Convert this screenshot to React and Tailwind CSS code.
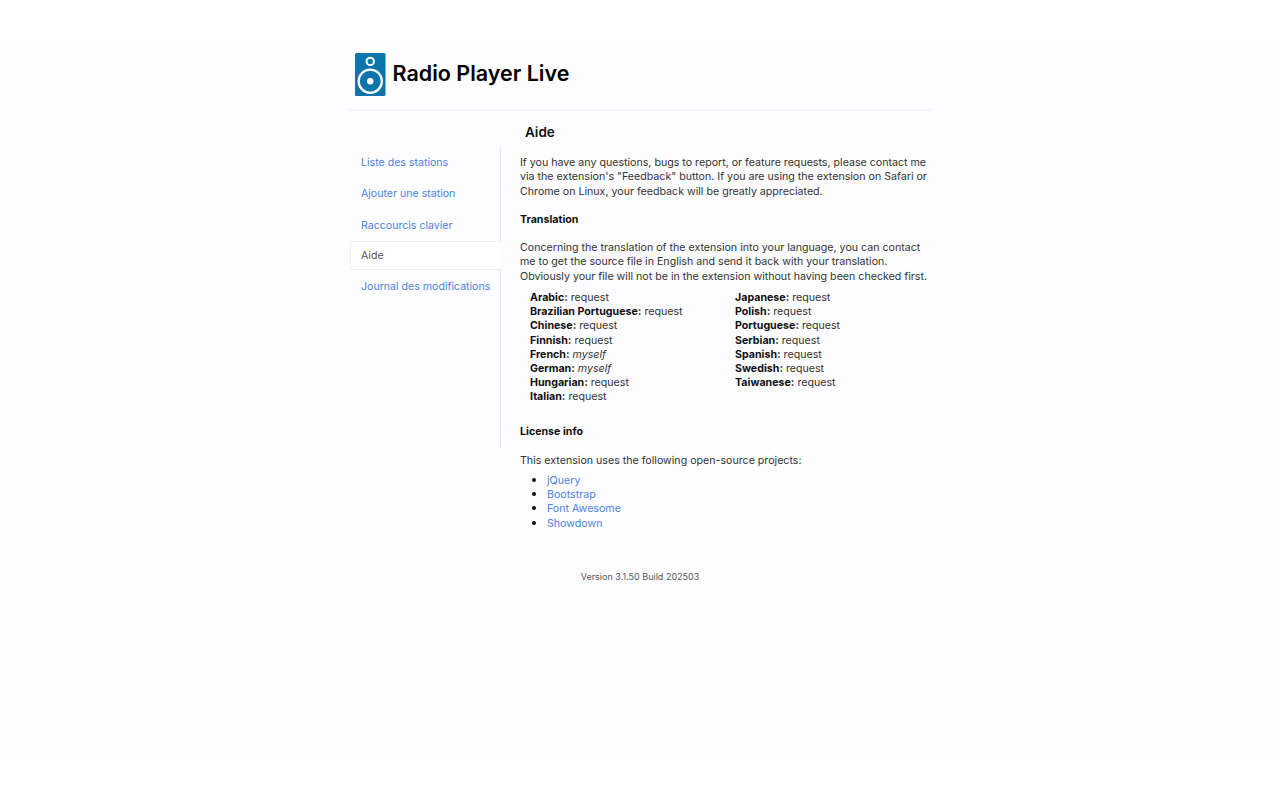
const navItems = [
  { label: "Liste des stations" },
  { label: "Ajouter une station" },
  { label: "Raccourcis clavier" },
  { label: "Aide", active: true },
  { label: "Journal des modifications" },
];

const langsLeft = [
  ["Arabic:", "request"],
  ["Brazilian Portuguese:", "request"],
  ["Chinese:", "request"],
  ["Finnish:", "request"],
  ["French:", "myself", true],
  ["German:", "myself", true],
  ["Hungarian:", "request"],
  ["Italian:", "request"],
];

const langsRight = [
  ["Japanese:", "request"],
  ["Polish:", "request"],
  ["Portuguese:", "request"],
  ["Serbian:", "request"],
  ["Spanish:", "request"],
  ["Swedish:", "request"],
  ["Taiwanese:", "request"],
];

function Logo() {
  return (
    <svg width="31" height="43" viewBox="0 0 31 43" className="shrink-0">
      <rect x="0" y="0" width="30.5" height="43" rx="1.5" fill="#0a75ad" />
      <circle cx="15.25" cy="8.4" r="3.7" fill="none" stroke="#fff" strokeWidth="2" />
      <circle cx="15.25" cy="28.2" r="11.6" fill="none" stroke="#fff" strokeWidth="2.3" />
      <circle cx="15.25" cy="28.2" r="3.2" fill="#fff" />
    </svg>
  );
}

function LangList({ items, className }) {
  return (
    <div className={className}>
      {items.map(([name, value, italic]) => (
        <div key={name} className="h-[14.15px]">
          <b className="font-bold text-[#111]">{name}</b>{" "}
          {italic ? <i>{value}</i> : value}
        </div>
      ))}
    </div>
  );
}

export default function App() {
  return (
    <div className="min-h-[800px] bg-white py-[40px] font-['Inter',sans-serif] text-[10.6px] leading-[14.3px] text-[#333]">
      <div className="h-[720px] bg-[#fdfdff]">
        <div className="mx-auto w-[582px]">
          <div className="flex items-start gap-[7px] border-b-2 border-[#f4f4f6] pl-[5.5px] pt-[13px] pb-[13px]">
            <Logo />
            <h1 className="mt-[6px] text-[21.5px] leading-[28px] font-semibold text-black">Radio Player Live</h1>
          </div>

          <h3 className="ml-[176px] mt-[12px] text-[13.5px] leading-[18px] font-semibold text-[#111]">Aide</h3>

          <div className="mt-[8px] flex">
            <div className="w-[152px] shrink-0 pl-px">
              <div className="h-[299px] border-r border-[#e8e8ec]">
                <div className="-mt-[1.5px]">
                  {navItems.map((item) =>
                    item.active ? (
                      <div
                        key={item.label}
                        className="-mr-px mb-px flex h-[29px] items-center rounded-l-[3px] border border-r-0 border-[#eeeeee] bg-white pl-[10px] pt-px text-[#555]"
                      >
                        {item.label}
                      </div>
                    ) : (
                      <a key={item.label} className="flex h-[31.3px] items-center pl-[11px] text-[#4b82e0]">
                        {item.label}
                      </a>
                    )
                  )}
                </div>
              </div>
            </div>

            <div className="ml-[19px] w-[411px] shrink-0 pt-[7px] text-[10.65px]">
              <p>
                If you have any questions, bugs to report, or feature requests, please contact me via the
                extension's "Feedback" button. If you are using the extension on Safari or Chrome on Linux,
                your feedback will be greatly appreciated.
              </p>
              <h4 className="mt-[14.5px] font-bold text-[#111]">Translation</h4>
              <p className="mt-[13.5px]">
                Concerning the translation of the extension into your language, you can contact me to get the
                source file in English and send it back with your translation. Obviously your file will not
                be in the extension without having been checked first.
              </p>
              <div className="mt-[7px] flex pl-[10px]">
                <LangList items={langsLeft} className="w-[205px]" />
                <LangList items={langsRight} />
              </div>
              <h4 className="mt-[21px] font-bold text-[#111]">License info</h4>
              <p className="mt-[14.5px]">This extension uses the following open-source projects:</p>
              <ul className="mt-[3.5px] list-disc pl-[27px] text-[#4b82e0] marker:text-[#111] marker:text-[13px]">
                <li className="h-[14.3px]">jQuery</li>
                <li className="h-[14.3px]">Bootstrap</li>
                <li className="h-[14.3px]">Font Awesome</li>
                <li className="h-[14.3px]">Showdown</li>
              </ul>
            </div>
          </div>

          <div className="mt-[41px] text-center text-[9px] text-[#555]">Version 3.1.50 Build 202503</div>
        </div>
      </div>
    </div>
  );
}
